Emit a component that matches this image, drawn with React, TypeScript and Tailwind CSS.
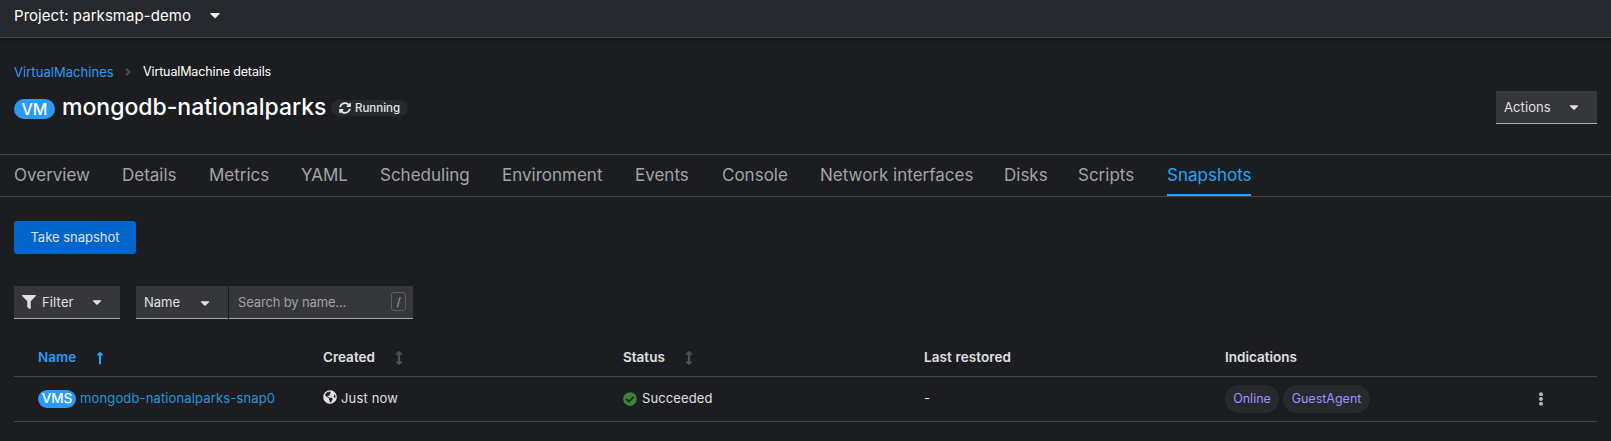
import type { ReactNode } from 'react';
import { FaAngleRight, FaArrowsAltV, FaCaretDown, FaCheckCircle, FaEllipsisV, FaFilter, FaGlobeAmericas, FaLongArrowAltUp, FaSyncAlt } from 'react-icons/fa';

const tabs = [
  { label: 'Overview', width: 'w-[76px]' },
  { label: 'Details', width: 'w-[55px]' },
  { label: 'Metrics', width: 'w-[60px]' },
  { label: 'YAML', width: 'w-[47px]' },
  { label: 'Scheduling', width: 'w-[90px]' },
  { label: 'Environment', width: 'w-[101px]' },
  { label: 'Events', width: 'w-[55px]' },
  { label: 'Console', width: 'w-[66px]' },
  { label: 'Network interfaces', width: 'w-[152px]' },
  { label: 'Disks', width: 'w-[42px]' },
  { label: 'Scripts', width: 'w-[57px]' },
  { label: 'Snapshots', width: 'w-[84px]' },
];

const columns = 'grid grid-cols-[285px_300px_301px_301px_315px_1fr] pl-6';

function Toggle({ className, children }: { className: string; children: ReactNode }) {
  return (
    <button className={`flex h-[33px] items-center border-b border-[#aaabac] bg-[#36373a] pl-2 text-[13px] text-[#e0e0e0] ${className}`}>
      {children}
    </button>
  );
}

function ProjectBar() {
  return (
    <header className="relative flex h-[38px] items-start border-b border-[#444548] bg-[#26292d] pl-3.5 pt-1 text-[15px] leading-6 tracking-[0.05px] text-white shadow-[0_1px_4px_rgba(0,0,0,0.45)]">
      Project: parksmap-demo
      <FaCaretDown className="ml-[16px] mt-[3px] h-4 w-4" />
    </header>
  );
}

function Heading() {
  return (
    <div className="flex h-[116px] justify-between pl-3.5 pr-3.5">
      <div>
        <nav className="flex items-center pt-[23px] leading-5 text-white">
          <a className="w-[100px] whitespace-nowrap pt-px text-[13px] tracking-[0.05px] text-[#2b9af3]">VirtualMachines</a>
          <FaAngleRight className="ml-2 mr-[9px] h-3 w-3 text-[#4f5255]" />
          <span className="text-[12.5px] tracking-[-0.13px]">VirtualMachine details</span>
        </nav>
        <div className="mt-[9px] flex items-center">
          <span className="mt-[3px] flex h-5 w-[41px] items-center justify-center rounded-full bg-[#2b9af3] text-base font-medium text-white">VM</span>
          <h1 className="ml-[7px] w-[264px] whitespace-nowrap text-[23px] font-medium leading-8 text-white">mongodb-nationalparks</h1>
          <span className="ml-[5px] mt-[2px] flex h-4 w-[77px] items-center rounded-full bg-[#26292d] pl-2 text-[11.5px] font-medium text-[#e8e8e8]">
            <FaSyncAlt className="mr-1 h-3 w-3" />
            <span className="pt-px">Running</span>
          </span>
        </div>
      </div>
      <Toggle className="mt-[53px] w-[101px]">
        <span className="w-[47px] pt-px text-left tracking-[0.1px]">Actions</span>
        <FaCaretDown className="ml-[16px] h-[14px] w-[14px]" />
      </Toggle>
    </div>
  );
}

function Tabs() {
  return (
    <nav className="flex h-[43px] gap-8 border-y border-[#444548] pl-3.5">
      {tabs.map(({ label, width }) => (
        <a
          key={label}
          className={`${width} whitespace-nowrap pt-2 text-[17px] leading-6 ${label === 'Snapshots' ? 'border-b-2 border-[#1fa7f8] text-[#1fa7f8]' : 'text-[#a3a4a5]'}`}
        >
          {label}
        </a>
      ))}
    </nav>
  );
}

function Toolbar() {
  return (
    <div className="mt-8 flex">
      <Toggle className="w-[106px]">
        <FaFilter className="mr-[6px] h-[14px] w-[14px]" />
        <span className="w-[32px] pt-px text-left tracking-[0.15px]">Filter</span>
        <FaCaretDown className="ml-[16px] h-[14px] w-[14px]" />
      </Toggle>
      <Toggle className="ml-4 w-[92px]">
        <span className="w-[37px] pt-px text-left">Name</span>
        <FaCaretDown className="ml-[17px] mt-px h-[14px] w-[14px]" />
      </Toggle>
      <div className="ml-px flex h-[33px] w-[184px] items-center justify-between border-b border-[#aaabac] bg-[#36373a] pl-[9px] pr-[7px] text-[13px] tracking-[-0.15px] text-[#a0a1a3]">
        <span className="pt-px">Search by name...</span>
        <kbd className="mb-px flex h-[19px] w-[15px] items-center justify-center rounded-[3px] border border-[#5c5e61] font-['Inter'] text-[12px]">/</kbd>
      </div>
    </div>
  );
}

function SnapshotTable() {
  return (
    <div className="mx-3.5 mt-[18px] text-[13px] text-[#e0e0e0]">
      <div className={`${columns} h-10 items-center border-b border-[#444548] pt-0.5 text-[13.5px] font-semibold`}>
        <span className="flex items-center text-[#2b9af3]">
          <span className="w-[38px]">Name</span>
          <FaLongArrowAltUp className="ml-[17px] h-[14px] w-[14px] text-[#1fa7f8]" />
        </span>
        <span className="flex items-center">
          <span className="w-[53px]">Created</span>
          <FaArrowsAltV className="ml-[16px] h-[14px] w-[14px] text-[#4f5255]" />
        </span>
        <span className="flex items-center">
          <span className="w-[43px]">Status</span>
          <FaArrowsAltV className="ml-[16px] h-[14px] w-[14px] text-[#4f5255]" />
        </span>
        <span className="tracking-[0.1px]">Last restored</span>
        <span>Indications</span>
        <span />
      </div>
      <div className={`${columns} h-[45px] items-center border-b border-[#444548]`}>
        <span className="flex items-center">
          <span className="mb-px flex h-[18px] w-[38px] items-center justify-center rounded-full bg-[#2b9af3] text-[13.5px] font-medium text-white">VMS</span>
          <a className="ml-1 whitespace-nowrap text-[13px] tracking-[0.14px] text-[#2394de]">mongodb-nationalparks-snap0</a>
        </span>
        <span className="flex items-center">
          <FaGlobeAmericas className="mb-1 mr-1 h-[14px] w-[14px]" />
          <span className="tracking-[0.15px]">Just now</span>
        </span>
        <span className="flex items-center">
          <FaCheckCircle className="mr-[5px] h-[14px] w-[14px] text-[#3e8635]" />
          <span className="tracking-[0.1px]">Succeeded</span>
        </span>
        <span>-</span>
        <span className="flex gap-1 text-[12.5px] text-[#a18fff]">
          <span className="flex h-7 w-[54px] items-center justify-center rounded-full bg-[#26292d]">Online</span>
          <span className="flex h-7 w-[87px] items-center justify-center rounded-full bg-[#26292d]">GuestAgent</span>
        </span>
        <FaEllipsisV className="-ml-[6px] h-[14px] w-[14px] text-[#b4b5b6]" />
      </div>
    </div>
  );
}

export default function App() {
  return (
    <div className="h-[441px] overflow-hidden bg-[#1b1d21] font-['Inter',sans-serif]">
      <ProjectBar />
      <Heading />
      <Tabs />
      <main>
        <button className="ml-3.5 mt-6 flex h-[33px] w-[122px] items-center justify-center rounded-[3px] bg-[#0066cc] text-[13px] text-[#e0e0e0]">
          Take snapshot
        </button>
        <div className="ml-3.5">
          <Toolbar />
        </div>
        <SnapshotTable />
      </main>
    </div>
  );
}
